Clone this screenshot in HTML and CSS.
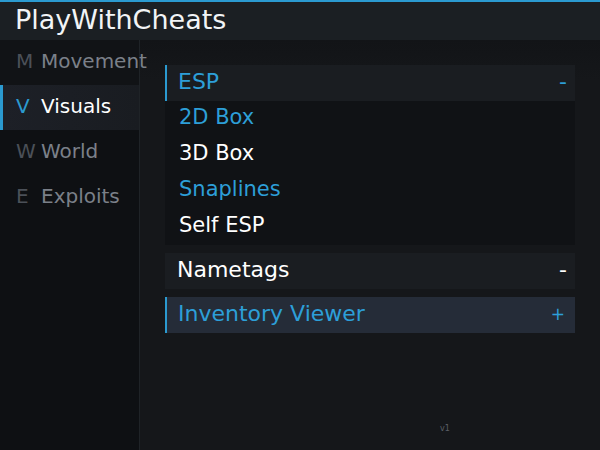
FILE: index.html
```html
<!DOCTYPE html>
<html>
<head>
<meta charset="utf-8">
<link rel="stylesheet" href="styles.css">
</head>
<body>
<div class="app">
  <header class="header">PlayWithCheats</header>
  <div class="body">
    <nav class="sidebar">
      <div class="nav-item first"><span class="ico">M</span><span class="lbl">Movement</span></div>
      <div class="nav-item active"><span class="ico">V</span><span class="lbl">Visuals</span></div>
      <div class="nav-item"><span class="ico">W</span><span class="lbl">World</span></div>
      <div class="nav-item"><span class="ico">E</span><span class="lbl">Exploits</span></div>
    </nav>
    <main class="main">
      <section class="group">
        <div class="group-head accent"><span>ESP</span><span class="sign">-</span></div>
        <div class="group-body">
          <div class="opt on">2D Box</div>
          <div class="opt">3D Box</div>
          <div class="opt on">Snaplines</div>
          <div class="opt">Self ESP</div>
        </div>
      </section>
      <section class="group">
        <div class="group-head plain"><span>Nametags</span><span class="sign">-</span></div>
      </section>
      <section class="group">
        <div class="group-head closed accent"><span>Inventory Viewer</span><span class="sign plus">+</span></div>
      </section>
      <div class="version">v1</div>
    </main>
  </div>
</div>
</body>
</html>
```

FILE: styles.css
```css
* { box-sizing: border-box; }
html, body { margin: 0; padding: 0; }
body {
  width: 600px;
  height: 450px;
  overflow: hidden;
  background: #16181b;
  font-family: "DejaVu Sans", "Noto Sans", sans-serif;
}
.app {
  width: 600px;
  height: 450px;
  display: flex;
  flex-direction: column;
  border-top: 2px solid #2b9ad0;
}
.header {
  height: 38px;
  background: #1b1f23;
  color: #f2f4f6;
  font-size: 27px;
  line-height: 36px;
  padding-left: 15px;
}
.body {
  flex: 1;
  display: flex;
}
.sidebar {
  width: 140px;
  flex: none;
  position: relative;
  z-index: 1;
  background: #0e1013;
  border-right: 1px solid #1f2327;
  display: flex;
  flex-direction: column;
}
.nav-item {
  height: 45px;
  display: flex;
  align-items: center;
  padding-left: 16px;
  padding-bottom: 3px;
  font-size: 20px;
  color: #7b8089;
  white-space: nowrap;
}
.nav-item.first { background: #111316; }
.nav-item .ico {
  color: #4b5058;
  width: 25px;
  flex: none;
}
.nav-item.active {
  background: linear-gradient(90deg, #1d2027, #191c21);
  border-left: 3px solid #2b9ad0;
  padding-left: 13px;
  color: #ffffff;
}
.nav-item.active .ico { color: #2b9ad0; }
.main {
  flex: 1;
  position: relative;
  padding: 25px 25px 0 25px;
  display: flex;
  flex-direction: column;
  gap: 8px;
  background: linear-gradient(180deg, #121417 0px, #15171a 40px);
}
.group-head {
  height: 36px;
  display: flex;
  align-items: center;
  justify-content: space-between;
  padding: 0 8px 3px 12px;
  font-size: 22px;
  background: #1a1d21;
  color: #ffffff;
}
.group-head.accent {
  border-left: 2px solid #2b9ad0;
  padding-left: 11px;
  color: #2d9fd8;
}
.group-head.closed { background: #252c38; }
.sign.plus { font-size: 17px; padding-right: 2px; }
.group-body {
  background: #101215;
  padding: 0 0 0 14px;
}
.opt {
  height: 36px;
  line-height: 32px;
  font-size: 21px;
  color: #ffffff;
}
.opt.on { color: #2d9fd8; }
.version {
  position: absolute;
  left: 300px;
  top: 384px;
  font-size: 8px;
  color: #5a5f66;
}
```
